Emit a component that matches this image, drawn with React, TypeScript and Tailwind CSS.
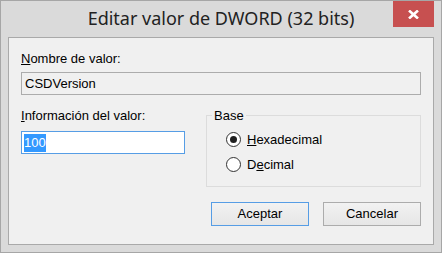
import React from 'react';

const dialogFont = { fontFamily: '"Liberation Sans", Arial, sans-serif' };

const Radio: React.FC<{ checked?: boolean; children: React.ReactNode }> = ({ checked, children }) => (
  <label className="flex items-center h-[25px] text-[13px] leading-[15px] text-black">
    <span className="w-[15px] h-[15px] rounded-full border border-[#333333] bg-white flex items-center justify-center mr-[6px]">
      {checked && <span className="w-[7px] h-[7px] rounded-full bg-[#1f1f1f]" />}
    </span>
    {children}
  </label>
);

const App: React.FC = () => {
  return (
    <div className="w-[442px] h-[253px] border border-[#a6a6a6] bg-[#dadada] flex flex-col" style={dialogFont}>
      {/* Title bar */}
      <div className="h-[36px] grid grid-cols-[1fr_auto_1fr]">
        <div />
        <div
          className="pt-[4px] text-[18px] leading-[26px] text-[#222222] whitespace-nowrap"
          style={{ fontFamily: '"Noto Sans", "Open Sans", sans-serif' }}
        >
          Editar valor de DWORD (32 bits)
        </div>
        <div className="flex justify-end items-start">
          <div className="w-[41px] h-[26px] mr-[7px] bg-[#c75050] flex items-center justify-center">
            <svg width="11" height="9" viewBox="0 0 11 9">
              <path d="M1 0.5 L10 8.5 M10 0.5 L1 8.5" stroke="white" strokeWidth="2.6" />
            </svg>
          </div>
        </div>
      </div>

      {/* Client area */}
      <div className="mx-[7px] h-[208px] border border-[#a9a9a9] bg-[#f0f0f0] px-[12px] pt-[13px] flex flex-col">
        <div className="text-[13px] leading-[15px] text-black">
          <span className="underline underline-offset-1">N</span>ombre de valor:
        </div>
        <div className="mt-[6px] h-[23px] border border-[#acacac] bg-[#f0f0f0] px-[3px] text-[13px] leading-[21px] text-black">
          CSDVersion
        </div>

        <div className="mt-[13px] flex items-start">
          <div className="w-[164px] flex flex-col">
            <div className="text-[13px] leading-[15px] text-black">
              <span className="underline underline-offset-1">I</span>nformación del valor:
            </div>
            <div className="mt-[8px] h-[23px] border border-[#569de5] bg-white px-[2px] flex items-center">
              <span className="h-[18px] leading-[18px] text-[13px] bg-[#3399ff] text-white">100</span>
            </div>
          </div>

          <fieldset className="ml-auto w-[215px] h-[79px] border border-[#dcdcdc] pl-[19px]">
            <legend className="ml-[-14px] px-[2px] text-[13px] leading-[15px] text-black">Base</legend>
            <div className="pt-[4px] flex flex-col">
              <Radio checked>
                <span>
                  <span className="underline underline-offset-1">H</span>exadecimal
                </span>
              </Radio>
              <Radio>
                <span>
                  D<span className="underline underline-offset-1">e</span>cimal
                </span>
              </Radio>
            </div>
          </fieldset>
        </div>

        <div className="mt-[15px] flex justify-end gap-[14px]">
          <button className="w-[98px] h-[24px] border border-[#569de5] bg-gradient-to-b from-[#f2f2f2] to-[#e6e6e6] text-[13px] text-black">
            Aceptar
          </button>
          <button className="w-[98px] h-[24px] border border-[#acacac] bg-gradient-to-b from-[#f2f2f2] to-[#e6e6e6] text-[13px] text-black">
            Cancelar
          </button>
        </div>
      </div>
    </div>
  );
};

export default App;
